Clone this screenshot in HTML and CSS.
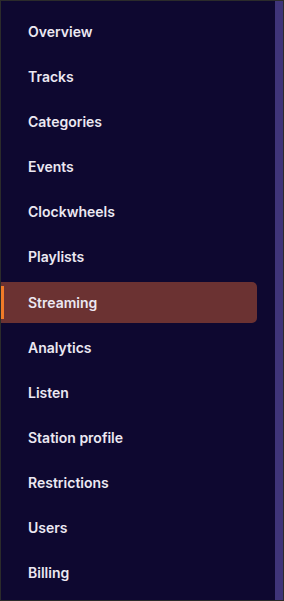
FILE: index.html
```html
<!DOCTYPE html>
<html lang="en">
<head>
    <meta charset="UTF-8">
    <meta name="viewport" content="width=device-width, initial-scale=1.0">
    <title>Station Menu</title>
    <link rel="stylesheet" href="styles.css">
</head>
<body>
    <div class="frame">
        <nav class="menu">
            <a class="item" href="#">Overview</a>
            <a class="item" href="#">Tracks</a>
            <a class="item" href="#">Categories</a>
            <a class="item" href="#">Events</a>
            <a class="item" href="#">Clockwheels</a>
            <a class="item" href="#">Playlists</a>
            <a class="item active" href="#">Streaming</a>
            <a class="item" href="#">Analytics</a>
            <a class="item" href="#">Listen</a>
            <a class="item" href="#">Station profile</a>
            <a class="item" href="#">Restrictions</a>
            <a class="item" href="#">Users</a>
            <a class="item" href="#">Billing</a>
        </nav>
        <div class="scrollbar"></div>
    </div>
</body>
</html>
```

FILE: styles.css
```css
* {
    box-sizing: border-box;
}

body {
    margin: 0;
    padding: 0;
    font-family: 'Inter', 'Roboto', sans-serif;
    background: #0e0830;
}

.frame {
    width: 284px;
    height: 601px;
    border: 1px solid #2b2b2b;
    background: #0e0830;
    display: flex;
    overflow: hidden;
}

.menu {
    flex: 1;
    display: flex;
    flex-direction: column;
    gap: 4.1px;
    padding: 10px 18px 0 0;
}

.item {
    position: relative;
    display: flex;
    align-items: center;
    height: 41px;
    flex-shrink: 0;
    padding-left: 27px;
    color: #ece8f2;
    font-size: 14px;
    font-weight: 600;
    text-decoration: none;
    border-radius: 0 5px 5px 0;
}

.item.active {
    background: #6b3232;
}

.item.active::before {
    content: '';
    position: absolute;
    left: 0;
    top: 4px;
    bottom: 4px;
    width: 3px;
    background: #f07a28;
}

.scrollbar {
    width: 8px;
    height: 100%;
    background: #3f3479;
}
```
